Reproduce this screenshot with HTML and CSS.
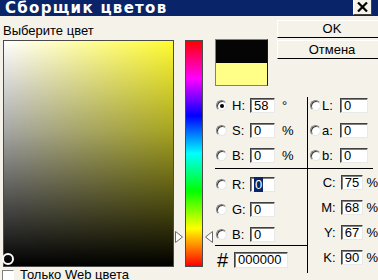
FILE: index.html
```html
<!DOCTYPE html>
<html lang="ru">
<head>
<meta charset="utf-8">
<title>Сборщик цветов</title>
<link rel="stylesheet" href="styles.css">
</head>
<body>
<div class="win">
  <div class="titlebar">
    <span class="title">Сборщик цветов</span>
    <span class="close"><svg width="11" height="10" viewBox="0 0 11 10"><path d="M1 0.5 L10 9.5 M10 0.5 L1 9.5" stroke="#000" stroke-width="2.2"/></svg></span>
  </div>
  <div class="body">
    <div class="left">
      <div class="label">Выберите цвет</div>
      <div class="pick">
        <div class="field"><span class="marker"></span></div>
        <div class="hue-wrap">
          <svg class="tri tri-l" width="9" height="12" viewBox="0 0 9 12"><polygon points="0.5,0.5 7.5,6 0.5,11.5" fill="#fff" stroke="#6a6a6a"/></svg>
          <div class="hue"></div>
          <svg class="tri tri-r" width="9" height="12" viewBox="0 0 9 12"><polygon points="8.5,0.5 1.5,6 8.5,11.5" fill="#fff" stroke="#6a6a6a"/></svg>
        </div>
      </div>
      <div class="web"><span class="check"></span><span>Только Web цвета</span></div>
    </div>
    <div class="right">
      <div class="top">
        <div class="swatch"><div class="new"></div><div class="old"></div></div>
        <div class="buttons">
          <div class="btn ok">OK</div>
          <div class="btn cancel">Отмена</div>
        </div>
      </div>
      <div class="controls">
        <div class="col col-a">
          <div class="grp">
            <div class="row"><span class="radio on"><span class="dot"></span></span><span class="lbl">H:</span><span class="box">58</span><span class="unit">°</span></div>
            <div class="row"><span class="radio"></span><span class="lbl">S:</span><span class="box">0</span><span class="unit">%</span></div>
            <div class="row"><span class="radio"></span><span class="lbl">B:</span><span class="box">0</span><span class="unit">%</span></div>
          </div>
          <div class="grp rgb">
            <div class="row"><span class="radio"></span><span class="lbl">R:</span><span class="box"><span class="sel">0</span></span></div>
            <div class="row"><span class="radio"></span><span class="lbl">G:</span><span class="box">0</span></div>
            <div class="row"><span class="radio"></span><span class="lbl">B:</span><span class="box">0</span></div>
          </div>
          <div class="hex"><span class="hash">#</span><span class="box hexbox">000000</span></div>
        </div>
        <div class="col col-b">
          <div class="grp lab">
            <div class="row"><span class="radio"></span><span class="lbl">L:</span><span class="box">0</span></div>
            <div class="row"><span class="radio"></span><span class="lbl">a:</span><span class="box">0</span></div>
            <div class="row"><span class="radio"></span><span class="lbl">b:</span><span class="box">0</span></div>
          </div>
          <div class="cmyk">
            <div class="row"><span class="clbl">C:</span><span class="box">75</span><span class="unit">%</span></div>
            <div class="row"><span class="clbl">M:</span><span class="box">68</span><span class="unit">%</span></div>
            <div class="row"><span class="clbl">Y:</span><span class="box">67</span><span class="unit">%</span></div>
            <div class="row"><span class="clbl">K:</span><span class="box">90</span><span class="unit">%</span></div>
          </div>
        </div>
      </div>
    </div>
  </div>
</div>
</body>
</html>
```

FILE: styles.css
```css
* { box-sizing: border-box; margin: 0; padding: 0; }
html, body { width: 378px; height: 280px; overflow: hidden; }
body {
  background: #f5f2ea;
  font-family: "Liberation Sans", Arial, sans-serif;
  font-size: 13px;
  color: #000;
}
.win { width: 378px; height: 280px; overflow: hidden; display: flex; flex-direction: column; }

.titlebar {
  height: 16px;
  flex: none;
  background: #0a246a;
  display: flex;
  justify-content: space-between;
  align-items: flex-start;
  padding-left: 5px;
  padding-right: 6px;
}
.title {
  color: #fff;
  font-family: "DejaVu Sans", sans-serif;
  font-weight: bold;
  font-size: 15px;
  letter-spacing: 1.3px;
  line-height: 16px;
}
.close {
  width: 19px;
  height: 15px;
  background: #f5f2ea;
  border-left: 1px solid #fff;
  border-right: 1px solid #404040;
  border-bottom: 1px solid #404040;
  display: flex;
  align-items: center;
  justify-content: center;
}

.body { flex: 1; display: flex; gap: 9px; padding-left: 3px; }

.left { width: 203px; flex: none; display: flex; flex-direction: column; padding-top: 7px; }
.label { height: 17px; line-height: 15px; }
.pick { display: flex; height: 227px; }
.field {
  position: relative;
  width: 171px;
  height: 227px;
  border: 1px solid #4a4a4a;
  background:
    linear-gradient(to bottom, rgba(0,0,0,0) 0%, rgba(0,0,0,0.35) 40%, #000 100%),
    linear-gradient(to right, #fff 0%, #fffb30 100%);
}
.marker {
  position: absolute;
  left: -2px;
  top: 212px;
  width: 12px;
  height: 12px;
  border-radius: 50%;
  border: 2px solid #fff;
}
.hue-wrap { position: relative; margin-left: 11px; width: 18px; }
.hue {
  height: 100%;
  border: 1px solid #4a4a4a;
  background: linear-gradient(to bottom, #f00 0%, #f0f 16.7%, #00f 33.3%, #0ff 50%, #0f0 66.7%, #ff0 83.3%, #f00 100%);
}
.tri { position: absolute; top: 191px; }
.tri-l { left: -10px; }
.tri-r { right: -10px; }

.web { display: flex; align-items: center; height: 13px; margin-top: 1px; margin-left: -1px; line-height: 15px; }
.check {
  width: 12px;
  height: 12px;
  background: #fff;
  border: 1px solid;
  border-color: #808080 #fff #fff #808080;
  margin-right: 6px;
  margin-top: 2px;
}

.right { flex: 1; padding-top: 4px; }
.top { display: flex; gap: 9px; }
.swatch {
  margin-top: 19px;
  width: 53px;
  height: 47px;
  border: 1px solid #808080;
  border-right-color: #1a1a1a;
  display: flex;
  flex-direction: column;
}
.new { flex: 1; background: #050505; }
.old { flex: 1; background: #ffff88; }
.buttons { display: flex; flex-direction: column; gap: 2px; }
.btn {
  width: 110px;
  text-align: center;
  background: #f5f2ea;
  border: 1px solid;
  border-color: #fff #404040 #000 #fff;
}
.ok { height: 18px; line-height: 16px; }
.cancel { height: 19px; line-height: 17px; }

.controls { display: flex; margin-top: 11px; }
.col-a { width: 93px; border-right: 1px solid #000; padding-top: 1px; padding-left: 1px; padding-bottom: 5px; }
.col-b { width: 70px; padding-top: 1px; }

.grp {
  display: flex;
  flex-direction: column;
  gap: 10px;
  padding-bottom: 5px;
  border-bottom: 1px solid #000;
}
.col-a .grp { margin-left: -1px; padding-left: 1px; }
.grp.rgb { padding-top: 8px; padding-bottom: 3px; }
.lab { margin-right: 5px; padding-left: 2px; }

.row { display: flex; align-items: center; height: 15px; }
.radio {
  width: 11px;
  height: 11px;
  border-radius: 50%;
  background: #fff;
  border: 1px solid;
  border-color: #808080 #e8e8e8 #e8e8e8 #808080;
  box-shadow: inset 1px 1px #404040;
  display: flex;
  align-items: center;
  justify-content: center;
  flex: none;
}
.dot { width: 4px; height: 4px; border-radius: 50%; background: #000; }
.lbl { width: 18px; margin-left: 5px; line-height: 15px; }
.lab .lbl { width: 18px; margin-left: 1px; }

.box {
  height: 15px;
  width: 25px;
  background: #fff;
  border-top: 1px solid #404040;
  border-left: 1px solid #404040;
  border-right: 1px solid #e8e8e8;
  border-bottom: 1px solid #e8e8e8;
  box-shadow: inset 1px 1px #808080;
  padding-left: 3px;
  line-height: 13px;
  white-space: nowrap;
}
.lab .box { width: 28px; }
.unit { margin-left: 7px; line-height: 15px; }
.sel { background: #0a246a; color: #fff; padding: 0 1px; }

.hex { display: flex; align-items: center; padding-top: 6px; }
.hash { font-size: 20px; line-height: 16px; width: 17px; margin-left: 1px; }
.hexbox { width: 54px; height: 16px; line-height: 14px; }

.cmyk { display: flex; flex-direction: column; gap: 10px; padding-top: 6px; }
.clbl { width: 33px; text-align: right; padding-right: 5px; line-height: 15px; }
.cmyk .box { width: 23px; }
.cmyk .unit { margin-left: 3px; }
```
